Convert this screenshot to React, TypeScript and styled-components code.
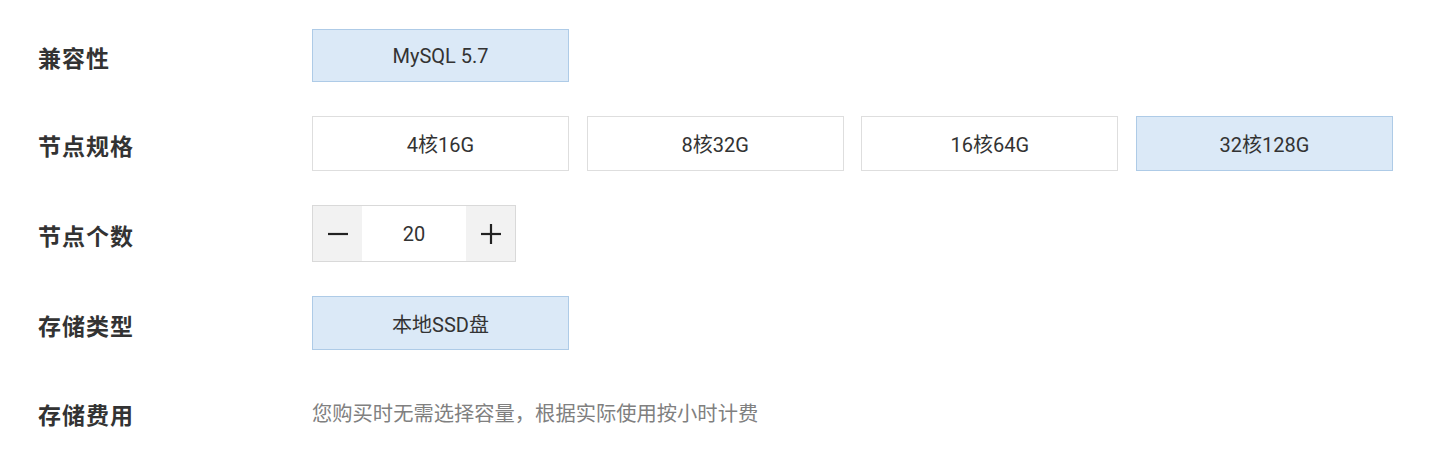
import React, { useState } from "react";
import styled, { createGlobalStyle } from "styled-components";

const GlobalStyle = createGlobalStyle`
  html, body {
    margin: 0;
    padding: 0;
    background: #ffffff;
  }
  body {
    font-family: Roboto, "Noto Sans CJK SC", sans-serif;
    color: #333333;
  }
`;

const Form = styled.div`
  display: flex;
  flex-direction: column;
  gap: 34px;
  padding: 29px 0 0 38px;
`;

const Row = styled.div<{ $h: number }>`
  display: grid;
  grid-template-columns: 274px 1fr;
  align-items: center;
  height: ${(p) => p.$h}px;
`;

const Label = styled.div`
  font-family: "Noto Sans CJK SC", sans-serif;
  font-weight: 700;
  font-size: 23px;
  letter-spacing: 1px;
  color: #333333;
  padding-top: 3px;
`;

const Options = styled.div`
  display: grid;
  grid-template-columns: repeat(4, 257px);
  column-gap: 17.67px;
  height: 100%;
`;

const Option = styled.button<{ $active?: boolean }>`
  box-sizing: border-box;
  height: 100%;
  border: 1px solid ${(p) => (p.$active ? "#aecbe7" : "#dedede")};
  background: ${(p) => (p.$active ? "#dbe9f7" : "#ffffff")};
  font-family: Roboto, "Noto Sans CJK SC", sans-serif;
  font-size: 20px;
  color: #333333;
  padding: 0;
  cursor: pointer;
  display: flex;
  align-items: center;
  justify-content: center;
`;

const Stepper = styled.div`
  box-sizing: border-box;
  display: grid;
  grid-template-columns: 49px 104px 49px;
  width: 204px;
  height: 57px;
  border: 1px solid #d9d9d9;
`;

const StepBtn = styled.button`
  border: none;
  padding: 0;
  background: #f2f2f2;
  display: flex;
  align-items: center;
  justify-content: center;
  cursor: pointer;
`;

const StepValue = styled.div`
  background: #ffffff;
  display: flex;
  align-items: center;
  justify-content: center;
  font-family: Roboto, sans-serif;
  font-size: 20px;
  color: #333333;
`;

const Note = styled.div`
  font-family: "Noto Sans CJK SC", sans-serif;
  font-size: 20.3px;
  color: #808080;
`;

const MinusIcon = () => (
  <svg width="22" height="22" viewBox="0 0 22 22">
    <line x1="1" y1="11" x2="21" y2="11" stroke="#222" strokeWidth="2.2" />
  </svg>
);

const PlusIcon = () => (
  <svg width="22" height="22" viewBox="0 0 22 22">
    <line x1="1" y1="11" x2="21" y2="11" stroke="#222" strokeWidth="2.2" />
    <line x1="11" y1="1" x2="11" y2="21" stroke="#222" strokeWidth="2.2" />
  </svg>
);

const specs = ["4核16G", "8核32G", "16核64G", "32核128G"];

export default function App() {
  const [spec, setSpec] = useState(3);
  const [count, setCount] = useState(20);
  return (
    <>
      <GlobalStyle />
      <Form>
        <Row $h={53}>
          <Label>兼容性</Label>
          <Options>
            <Option $active>MySQL 5.7</Option>
          </Options>
        </Row>
        <Row $h={55}>
          <Label>节点规格</Label>
          <Options>
            {specs.map((s, i) => (
              <Option key={s} $active={i === spec} onClick={() => setSpec(i)}>
                {s}
              </Option>
            ))}
          </Options>
        </Row>
        <Row $h={57}>
          <Label>节点个数</Label>
          <Stepper>
            <StepBtn onClick={() => setCount((c) => Math.max(1, c - 1))}>
              <MinusIcon />
            </StepBtn>
            <StepValue>{count}</StepValue>
            <StepBtn onClick={() => setCount((c) => c + 1)}>
              <PlusIcon />
            </StepBtn>
          </Stepper>
        </Row>
        <Row $h={54}>
          <Label>存储类型</Label>
          <Options>
            <Option $active>本地SSD盘</Option>
          </Options>
        </Row>
        <Row $h={56}>
          <Label>存储费用</Label>
          <Note>您购买时无需选择容量，根据实际使用按小时计费</Note>
        </Row>
      </Form>
    </>
  );
}
